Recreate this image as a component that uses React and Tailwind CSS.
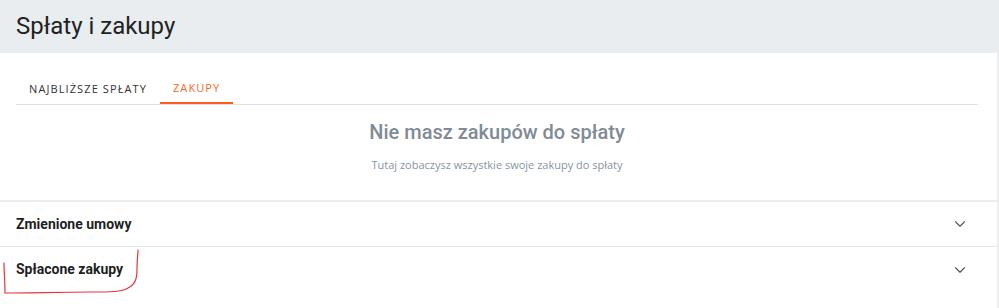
import { ChevronDown } from "lucide-react";

function AccordionRow({ title, last }) {
    return (
        <div className={`flex items-center justify-between h-[45px] pl-4 pr-[28px] ${last ? "" : "border-b border-[#e3e3e3]"}`}>
            <span className="text-[14px] font-bold text-[#1f1f1f] font-['Roboto',sans-serif]">{title}</span>
            <ChevronDown size={18} strokeWidth={1.5} className="text-[#555]" />
        </div>
    );
}

export default function App() {
    return (
        <div className="relative w-[999px] h-[308px] bg-white flex flex-col overflow-hidden">
            <header className="h-[53px] bg-[#e9edf0] flex items-center px-4 shrink-0">
                <h1 className="text-[24px] text-[#222] font-['Roboto',sans-serif] leading-none pb-[2px]">Spłaty i zakupy</h1>
            </header>
            <div className="flex flex-1">
                <main className="flex-1 flex flex-col">
                    <div className="pl-4 pr-[19px] pt-[24px]">
                        <nav className="flex border-b border-[#e0e0e0] h-[28px] font-['Open_Sans',sans-serif] text-[11px] tracking-[0.1em]">
                            <button className="px-[13px] uppercase text-[#333] h-full pb-[3px]">Najbliższe spłaty</button>
                            <button className="px-[13px] uppercase text-[#f26a2a] h-full pb-[3px] border-b-2 border-[#ff5a1f] -mb-px">Zakupy</button>
                        </nav>
                        <div className="flex flex-col items-center pt-[15px] h-[95px]">
                            <h2 className="text-[20px] font-medium text-[#7f8b96] font-['Roboto',sans-serif] leading-[24px]">Nie masz zakupów do spłaty</h2>
                            <p className="mt-[13px] text-[11px] text-[#8695a2] font-['Open_Sans',sans-serif]">Tutaj zobaczysz wszystkie swoje zakupy do spłaty</p>
                        </div>
                    </div>
                    <div className="border-t-2 border-[#ececec]">
                        <AccordionRow title="Zmienione umowy" />
                        <AccordionRow title="Spłacone zakupy" last />
                    </div>
                </main>
                <div className="w-[2px] bg-[#eceff1]" />
            </div>
            <svg className="absolute left-0 top-0 pointer-events-none" width="999" height="308" fill="none">
                <path d="M4 263 C4 272 5 282 5 293 C30 293 60 292 90 292 C110 292 122 292 128 288 C136 284 137 278 137 268 C137 260 138 254 138 250" stroke="#e8333c" strokeWidth="1.2" strokeLinecap="round" />
            </svg>
        </div>
    );
}
